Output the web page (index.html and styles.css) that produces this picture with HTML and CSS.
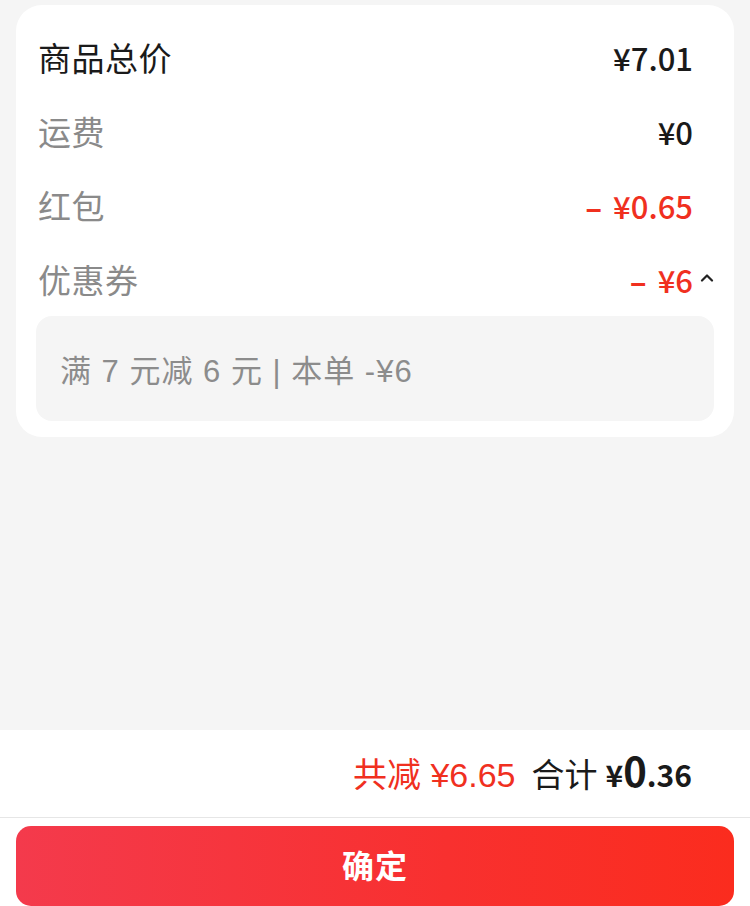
FILE: index.html
```html
<!DOCTYPE html>
<html lang="zh-CN">
<head>
<meta charset="utf-8">
<link rel="stylesheet" href="styles.css">
</head>
<body>
<div class="page">
  <section class="card">
    <div class="row">
      <span class="label label-main">商品总价</span>
      <span class="value">¥7.01</span>
    </div>
    <div class="row">
      <span class="label">运费</span>
      <span class="value">¥0</span>
    </div>
    <div class="row">
      <span class="label">红包</span>
      <span class="value red"><span class="minus">–</span>¥0.65</span>
    </div>
    <div class="row">
      <span class="label">优惠券</span>
      <span class="value red with-caret"><span class="minus">–</span>¥6<svg class="caret" width="14" height="9" viewBox="0 0 14 9"><polyline points="2,7.5 7,2.5 12,7.5" fill="none" stroke="#222" stroke-width="2.2" stroke-linecap="round" stroke-linejoin="round"/></svg></span>
    </div>
    <div class="coupon">满 7 元减 6 元 | 本单 -¥6</div>
  </section>

  <footer class="footer">
    <div class="summary">
      <span class="saved">共减 ¥6.65</span>
      <span class="total-label">合计</span>
      <span class="total"><span class="yen">¥</span><span class="int">0</span><span class="dec">.36</span></span>
    </div>
    <div class="action">
      <button class="confirm">确定</button>
    </div>
  </footer>
</div>
</body>
</html>
```

FILE: styles.css
```css
* { box-sizing: border-box; }
html, body {
  margin: 0;
  padding: 0;
  background: #f5f5f5;
  font-family: "Noto Sans CJK SC", "Noto Sans", sans-serif;
}
.page {
  display: flex;
  flex-direction: column;
  height: 906px;
  overflow: hidden;
}
.card {
  margin: 5px 16px 0;
  background: #fff;
  border-radius: 26px;
  padding: 15px 20px 16px;
}
.row {
  height: 74px;
  display: flex;
  align-items: center;
  justify-content: space-between;
  padding-left: 2px;
}
.label {
  font-size: 33px;
  color: #8a8a8a;
  letter-spacing: 0.5px;
}
.label-main {
  color: #1a1a1a;
}
.value {
  font-size: 31px;
  font-weight: 500;
  color: #1a1a1a;
  margin-right: 21px;
}
.value.red {
  color: #f0301f;
}
.minus {
  font-weight: 700;
  margin-right: 11px;
}
.with-caret {
  margin-right: 0;
  display: flex;
  align-items: center;
}
.caret {
  margin-left: 7px;
  margin-top: -4px;
}
.coupon {
  background: #f5f5f5;
  border-radius: 16px;
  height: 105px;
  display: flex;
  align-items: center;
  padding-left: 24px;
  font-family: "Liberation Sans", "Noto Sans CJK SC", sans-serif;
  font-size: 31px;
  letter-spacing: 1px;
  color: #8c8c8c;
}
.footer {
  margin-top: auto;
  background: #fff;
}
.summary {
  height: 88px;
  border-bottom: 1px solid #e6e6e6;
  display: flex;
  align-items: baseline;
  justify-content: flex-end;
  padding: 11px 58px 0 0;
}
.saved {
  color: #f0301f;
  font-family: "Liberation Sans", "Noto Sans CJK SC", sans-serif;
  font-size: 34px;
  margin-right: 16px;
}
.total-label {
  font-size: 33px;
  color: #1a1a1a;
  margin-right: 8px;
}
.total {
  color: #1a1a1a;
  font-weight: 700;
}
.yen { font-size: 30px; }
.int { font-size: 40px; }
.dec { font-size: 30px; }
.action {
  padding: 8px 16px 0;
  height: 88px;
}
.confirm {
  width: 100%;
  height: 80px;
  border: none;
  border-radius: 15px;
  background: linear-gradient(90deg, #f43a4c 0%, #f8302f 60%, #fb2c1e 100%);
  color: #fff;
  font-family: "Noto Sans CJK SC", sans-serif;
  font-size: 32px;
  font-weight: 700;
  letter-spacing: 1px;
  padding: 0 0 4px;
}
```
